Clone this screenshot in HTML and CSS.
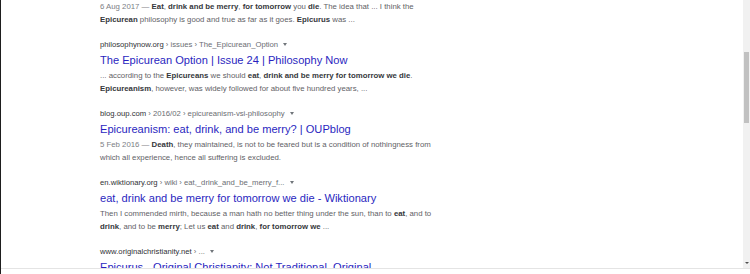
FILE: index.html
```html
<!DOCTYPE html>
<html lang="en">
<head>
  <meta charset="UTF-8" />
  <title>eat drink and be merry for tomorrow we die epicurean - Search</title>
  <link rel="stylesheet" href="styles.css">
</head>
<body>
  <div class="window">
    <div class="viewport">
      <div class="results">

        <div class="result first">
          <div class="snippet">
            <span class="date">6 Aug 2017 — </span><b>Eat</b>, <b>drink and be merry</b>, <b>for tomorrow</b> you <b>die</b>. The idea that ... I think the<br>
            <b>Epicurean</b> philosophy is good and true as far as it goes. <b>Epicurus</b> was ...
          </div>
        </div>

        <div class="result">
          <div class="cite"><span class="domain">philosophynow.org</span> › issues › The_Epicurean_Option <span class="caret"></span></div>
          <a class="title" href="#">The Epicurean Option | Issue 24 | Philosophy Now</a>
          <div class="snippet">
            ... according to the <b>Epicureans</b> we should <b>eat</b>, <b>drink and be merry for tomorrow we die</b>.<br>
            <b>Epicureanism</b>, however, was widely followed for about five hundred years, ...
          </div>
        </div>

        <div class="result">
          <div class="cite"><span class="domain">blog.oup.com</span> › 2016/02 › epicureanism-vsi-philosophy <span class="caret"></span></div>
          <a class="title" href="#">Epicureanism: eat, drink, and be merry? | OUPblog</a>
          <div class="snippet">
            <span class="date">5 Feb 2016 — </span><b>Death</b>, they maintained, is not to be feared but is a condition of nothingness from<br>
            which all experience, hence all suffering is excluded.
          </div>
        </div>

        <div class="result">
          <div class="cite"><span class="domain">en.wiktionary.org</span> › wiki › eat,_drink_and_be_merry_f... <span class="caret"></span></div>
          <a class="title" href="#">eat, drink and be merry for tomorrow we die - Wiktionary</a>
          <div class="snippet">
            Then I commended mirth, because a man hath no better thing under the sun, than to <b>eat</b>, and to<br>
            <b>drink</b>, and to be <b>merry</b>; Let us <b>eat</b> and <b>drink</b>, <b>for tomorrow we</b> ...
          </div>
        </div>

        <div class="result">
          <div class="cite"><span class="domain">www.originalchristianity.net</span> › ... <span class="caret"></span></div>
          <a class="title" href="#">Epicurus - Original Christianity: Not Traditional, Original</a>
        </div>

      </div>

      <div class="scrollbar">
        <div class="thumb"></div>
        <div class="arrow-down"></div>
      </div>
    </div>
    <div class="statusbar"></div>
  </div>
</body>
</html>
```

FILE: styles.css
```css
* {
  margin: 0;
  padding: 0;
  box-sizing: border-box;
}

body {
  width: 750px;
  height: 274px;
  background: #ffffff;
  font-family: 'Liberation Sans', Arial, sans-serif;
  overflow: hidden;
}

.window {
  height: 274px;
  border-left: 1px solid #1e1e1e;
  display: flex;
  flex-direction: column;
}

.viewport {
  height: 268px;
  display: flex;
  overflow: hidden;
}

.results {
  flex: 1;
  padding-left: 99px;
  padding-top: 0;
  overflow: hidden;
}

.result {
  margin-bottom: 13px;
}

.cite {
  font-size: 7.7px;
  line-height: 12px;
  color: #6a6d72;
  white-space: nowrap;
}

.cite .domain {
  color: #303236;
}

.caret {
  display: inline-block;
  width: 0;
  height: 0;
  margin-left: 3px;
  vertical-align: middle;
  border-left: 2.5px solid transparent;
  border-right: 2.5px solid transparent;
  border-top: 3px solid #70757a;
}

.title {
  display: block;
  font-size: 11.1px;
  line-height: 18px;
  color: #2a1fc0;
  text-decoration: none;
  white-space: nowrap;
}

.snippet {
  font-size: 7.8px;
  line-height: 13px;
  color: #5f6266;
  white-space: nowrap;
}

.snippet b {
  color: #35373b;
}

.date {
  color: #7d8085;
}

.scrollbar {
  width: 7px;
  background: #f1f1f1;
  display: flex;
  flex-direction: column;
}

.thumb {
  margin-top: 52px;
  margin-left: 1px;
  width: 5px;
  height: 71px;
  background: #c1c1c1;
}

.arrow-down {
  margin-top: auto;
  margin-bottom: 4px;
  margin-left: 2px;
  width: 0;
  height: 0;
  border-left: 2px solid transparent;
  border-right: 2px solid transparent;
  border-top: 2px solid #505050;
}

.statusbar {
  height: 6px;
  border-top: 1px solid #e4e4e4;
  background: #ffffff;
}
```
